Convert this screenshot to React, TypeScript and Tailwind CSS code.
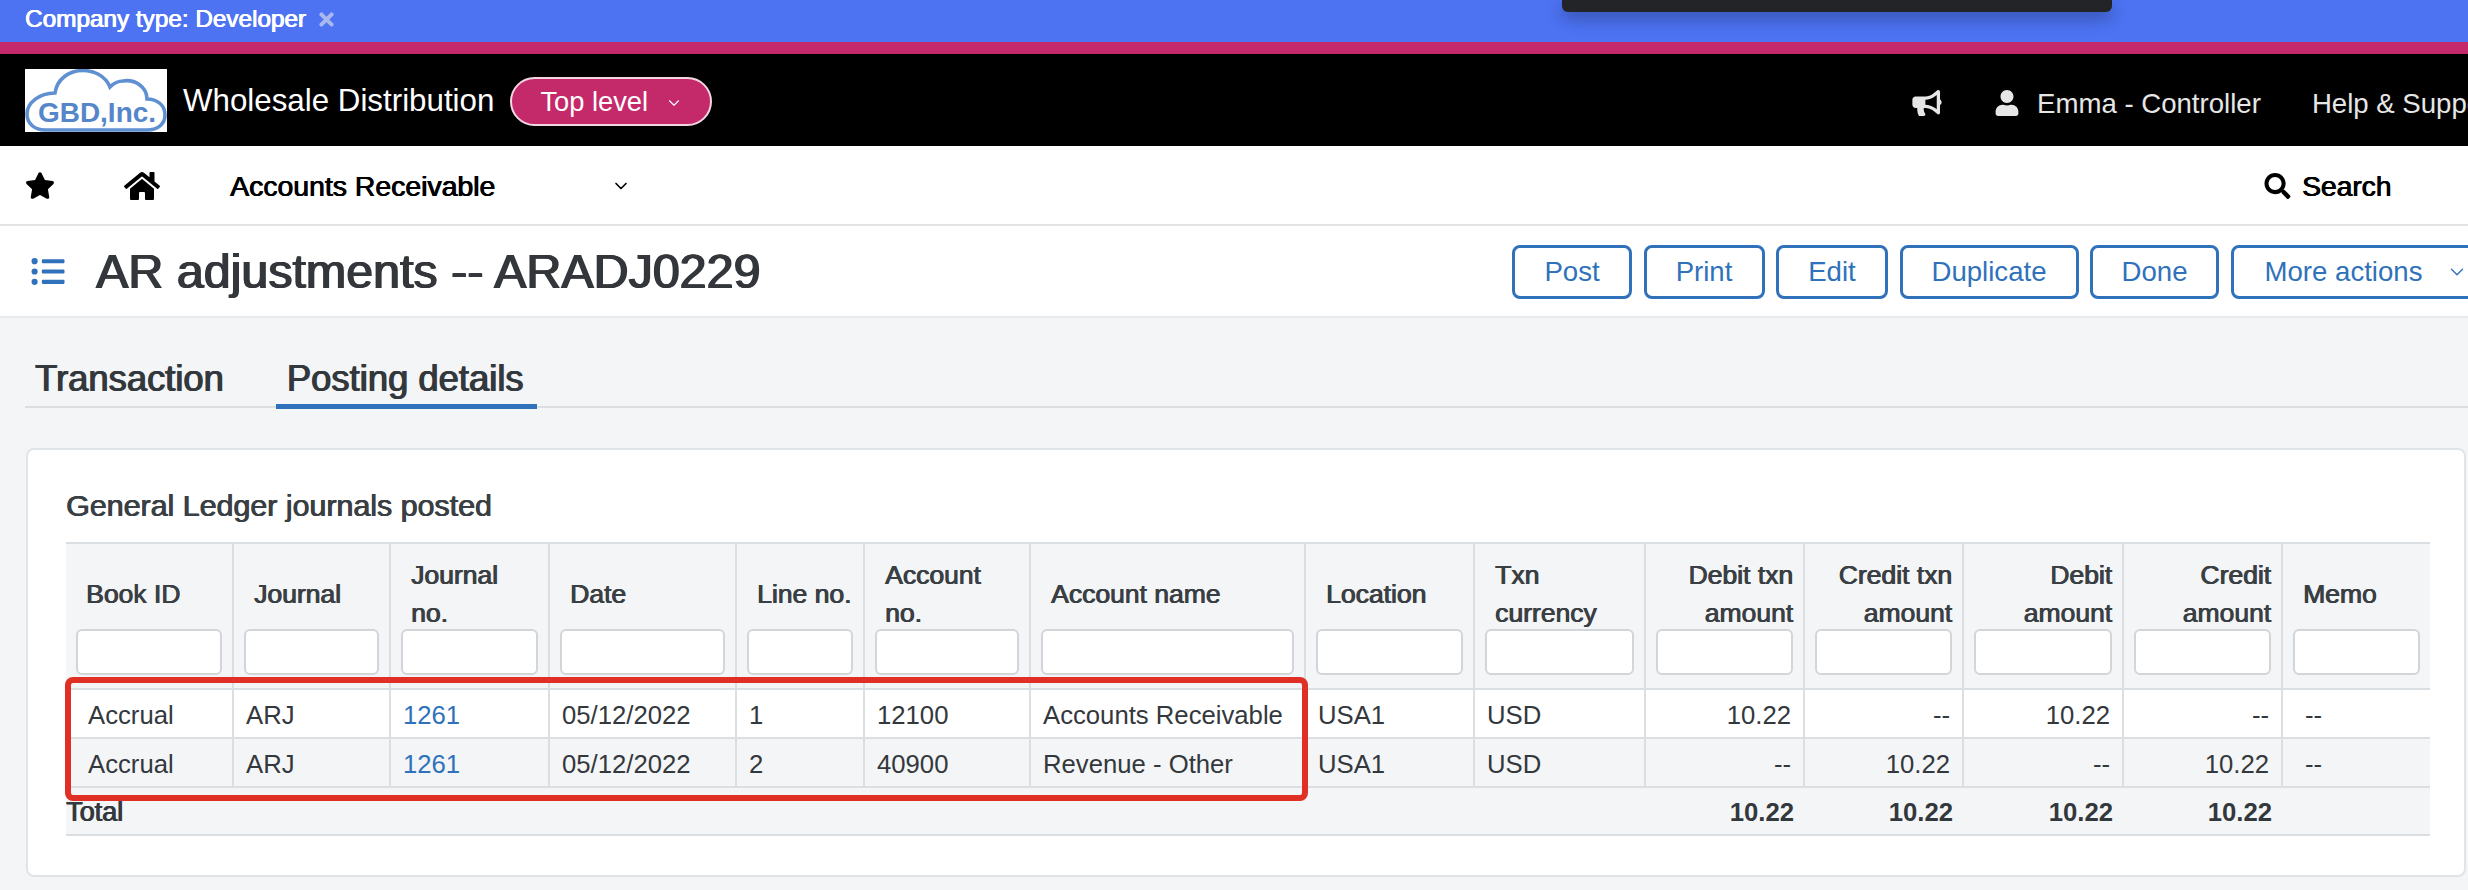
import { ChevronDown } from "lucide-react";
import { FaBullhorn, FaHome, FaListUl, FaSearch, FaStar, FaTimes, FaUser } from "react-icons/fa";

type Col = { label: string[]; width: string; right?: boolean };

const columns: Col[] = [
  { label: ["Book ID"], width: "w-[168px]" },
  { label: ["Journal"], width: "w-[157px]" },
  { label: ["Journal", "no."], width: "w-[159px]" },
  { label: ["Date"], width: "w-[187px]" },
  { label: ["Line no."], width: "w-[128px]" },
  { label: ["Account", "no."], width: "w-[166px]" },
  { label: ["Account name"], width: "w-[275px]" },
  { label: ["Location"], width: "w-[169px]" },
  { label: ["Txn", "currency"], width: "w-[171px]" },
  { label: ["Debit txn", "amount"], width: "w-[159px]", right: true },
  { label: ["Credit txn", "amount"], width: "w-[159px]", right: true },
  { label: ["Debit", "amount"], width: "w-[160px]", right: true },
  { label: ["Credit", "amount"], width: "w-[159px]", right: true },
  { label: ["Memo"], width: "w-[147px]" },
];

const rows = [
  ["Accrual", "ARJ", "1261", "05/12/2022", "1", "12100", "Accounts Receivable", "USA1", "USD", "10.22", "--", "10.22", "--", "--"],
  ["Accrual", "ARJ", "1261", "05/12/2022", "2", "40900", "Revenue - Other", "USA1", "USD", "--", "10.22", "--", "10.22", "--"],
];

const actions = ["Post", "Print", "Edit", "Duplicate", "Done"];
const actionWidths = ["w-[120px]", "w-[121px]", "w-[112px]", "w-[179px]", "w-[129px]"];

function Logo() {
  return (
    <svg viewBox="0 0 142 63" className="h-[63px] w-[142px] shrink-0 bg-white">
      <path
        d="M20 61H122C134 61 140 54 140 46C140 36 132 30 122 30C122 18 110 10 98 12C92 12 88 15 85 18C80 6 68 1.5 58 1.5C44 1.5 32 10 30 24C14 24 2 34 2 45C2 55 10 61 20 61Z"
        fill="none"
        stroke="#5f90d2"
        strokeWidth="3.6"
      />
      <text x="13" y="52.5" fontSize="28" fontWeight="700" fill="#5586c9" textLength="118" lengthAdjust="spacingAndGlyphs">
        GBD,Inc.
      </text>
    </svg>
  );
}

export default function App() {
  return (
    <div className="relative flex h-[890px] w-[2468px] flex-col overflow-hidden bg-[#f3f5f7] font-['Liberation_Sans',sans-serif] text-[#33383d]">
      {/* company strip */}
      <div className="flex h-[42px] shrink-0 items-center gap-[12px] bg-[#4d73f3] pb-[3px] pl-[25px] text-white">
        <span className="text-[24.3px] [text-shadow:0.6px_0_0_currentColor,-0.2px_0_0_currentColor]">Company type: Developer</span>
        <FaTimes className="h-[21px] w-[17px] text-[#a9b9ee]" />
      </div>
      <div className="absolute left-[1562px] top-0 h-[12px] w-[550px] rounded-b-md bg-[#232428] shadow-[0_6px_16px_rgba(20,30,70,0.45)]" />
      <div className="h-[12px] shrink-0 bg-[#c42a6a]" />

      {/* black header */}
      <div className="flex h-[92px] shrink-0 items-center overflow-hidden bg-black text-white">
        <div className="flex w-[1911px] shrink-0 items-center pl-[25px]">
          <Logo />
          <span className="ml-[16px] mt-[2px] text-[31.3px] leading-none">Wholesale Distribution</span>
          <button className="ml-[16px] mt-[3px] flex h-[49px] w-[202px] items-center rounded-full border-2 border-[#f3d6e2] bg-[#c42a6a] pl-[28px] pt-[2px] text-[27.3px]">
            Top level
            <ChevronDown className="ml-[17px] h-[18px] w-[18px]" strokeWidth={1.5} />
          </button>
        </div>
        <FaBullhorn className="mt-[5px] h-[26px] w-[32px] shrink-0 text-[#e6e6e6]" />
        <FaUser className="ml-[50px] mt-[5px] h-[26px] w-[28px] shrink-0 text-[#e6e6e6]" />
        <span className="ml-[16px] mt-[7px] shrink-0 text-[27.6px] text-[#e6e6e6]">Emma - Controller</span>
        <span className="ml-[51px] mt-[7px] shrink-0 text-[27.6px] text-[#e6e6e6]">Help &amp; Support</span>
      </div>

      {/* module nav */}
      <div className="flex h-[80px] shrink-0 items-center overflow-hidden border-b-2 border-[#e2e3e5] bg-white pt-[2px] text-black">
        <div className="flex w-[2264px] shrink-0 items-center pl-[25px]">
          <FaStar className="h-[27px] w-[30px]" />
          <FaHome className="ml-[68px] h-[32px] w-[38px]" />
          <span className="ml-[69px] text-[28.4px] [text-shadow:0.7px_0_0_currentColor,-0.2px_0_0_currentColor]">Accounts Receivable</span>
          <ChevronDown className="ml-[116px] h-[20px] w-[20px]" strokeWidth={2} />
        </div>
        <FaSearch className="h-[26px] w-[27px]" />
        <span className="ml-[11px] text-[28.2px] [text-shadow:0.7px_0_0_currentColor,-0.2px_0_0_currentColor]">Search</span>
      </div>

      {/* page title */}
      <div className="flex h-[92px] shrink-0 items-center border-b-2 border-[#e8eaec] bg-white">
        <div className="flex w-[1512px] shrink-0 items-center pl-[30px]">
          <FaListUl className="h-[33px] w-[36px] text-[#2f72bb]" />
          <h1 className="ml-[30px] text-[48.4px] font-normal leading-none text-[#33363a] [text-shadow:1px_0_0_currentColor,-0.7px_0_0_currentColor]">
            AR adjustments -- ARADJ0229
          </h1>
        </div>
        <div className="mt-[2px] flex shrink-0 gap-[11.5px]">
          {actions.map((a, i) => (
            <button
              key={a}
              className={`h-[54px] rounded-lg border-[3px] border-[#2f72bb] bg-white text-[27.6px] text-[#2f72bb] ${actionWidths[i]}`}
            >
              {a}
            </button>
          ))}
          <button className="flex h-[54px] w-[260px] items-center rounded-lg border-[3px] border-[#2f72bb] bg-white pl-[31px] text-[27.6px] text-[#2f72bb]">
            More actions
            <ChevronDown className="ml-[24px] h-[22px] w-[22px]" strokeWidth={1.5} />
          </button>
        </div>
      </div>

      {/* tabs */}
      <div className="ml-[25px] flex h-[90px] shrink-0 items-end border-b-2 border-[#dcdfe2] text-[36.4px] leading-[50px] text-[#33383d] [text-shadow:0.8px_0_0_currentColor,-0.5px_0_0_currentColor]">
        <span className="-mb-[3px] pb-[5px] pl-[10px]">Transaction</span>
        <span className="-mb-[3px] ml-[52px] border-b-[5px] border-[#2f72bb] pl-[11px] pr-[14px]">Posting details</span>
      </div>

      {/* card */}
      <div className="ml-[26px] mr-[2px] mt-[40px] h-[429px] shrink-0 rounded-lg border-2 border-[#e1e4e7] bg-white pl-[38px] pt-[39px]">
        <h2 className="text-[30.4px] leading-[32px] text-[#3a3f44] [text-shadow:0.7px_0_0_currentColor,-0.2px_0_0_currentColor]">General Ledger journals posted</h2>
        <div className="relative mt-[21px] w-[2364px]">
          <table className="w-[2364px] table-fixed border-separate border-spacing-0 text-[25.7px]">
            <thead>
              <tr>
                {columns.map((c, i) => (
                  <th
                    key={i}
                    className={`h-[148px] border-y-2 border-[#dcdfe2] bg-[#f3f5f7] px-[10px] pb-[13px] pt-[11px] align-top text-[26.5px] font-normal text-[#3a3f44] [text-shadow:0.7px_0_0_currentColor,-0.2px_0_0_currentColor] ${c.width} ${
                      i < columns.length - 1 ? "border-r-2" : ""
                    } ${c.right ? "text-right" : "text-left"}`}
                  >
                    <div className={`flex h-[76px] flex-col justify-center pt-[2px] leading-[38px] ${c.right ? "pr-0" : "pl-[10px]"}`}>
                      {c.label.map((l) => (
                        <span key={l} className="whitespace-nowrap">
                          {l}
                        </span>
                      ))}
                    </div>
                    <input className="-mt-[2px] block h-[46px] w-full rounded-md border-2 border-[#d2d5d9] bg-white" />
                  </th>
                ))}
              </tr>
            </thead>
            <tbody>
              {rows.map((r, ri) => (
                <tr key={ri} className={ri === 0 ? "bg-white" : "bg-[#f3f5f7]"}>
                  {r.map((cell, i) => (
                    <td
                      key={i}
                      className={`h-[49px] whitespace-nowrap border-b-2 border-[#dcdfe2] pt-[3px] ${
                        i < r.length - 1 ? "border-r-2" : ""
                      } ${columns[i].right ? "pr-[12px] text-right" : i === 0 ? "pl-[22px]" : i === 13 ? "pl-[22px]" : "pl-[12px]"} ${
                        i === 2 ? "text-[#2f72bb]" : ""
                      }`}
                    >
                      {cell}
                    </td>
                  ))}
                </tr>
              ))}
              <tr className="bg-[#f3f5f7] font-bold">
                <td colSpan={9} className="h-[48px] border-b-2 border-[#dcdfe2] pt-[2px] text-[27px] font-normal [text-shadow:0.7px_0_0_currentColor,-0.2px_0_0_currentColor]">
                  Total
                </td>
                {["10.22", "10.22", "10.22", "10.22"].map((t, i) => (
                  <td key={i} className="border-b-2 border-[#dcdfe2] pr-[11px] pt-[2px] text-right">
                    {t}
                  </td>
                ))}
                <td className="border-b-2 border-[#dcdfe2]" />
              </tr>
            </tbody>
          </table>
          {/* red annotation */}
          <div className="absolute -left-px top-[135px] h-[124px] w-[1243px] rounded-lg border-[6px] border-[#e03025]" />
        </div>
      </div>
    </div>
  );
}
